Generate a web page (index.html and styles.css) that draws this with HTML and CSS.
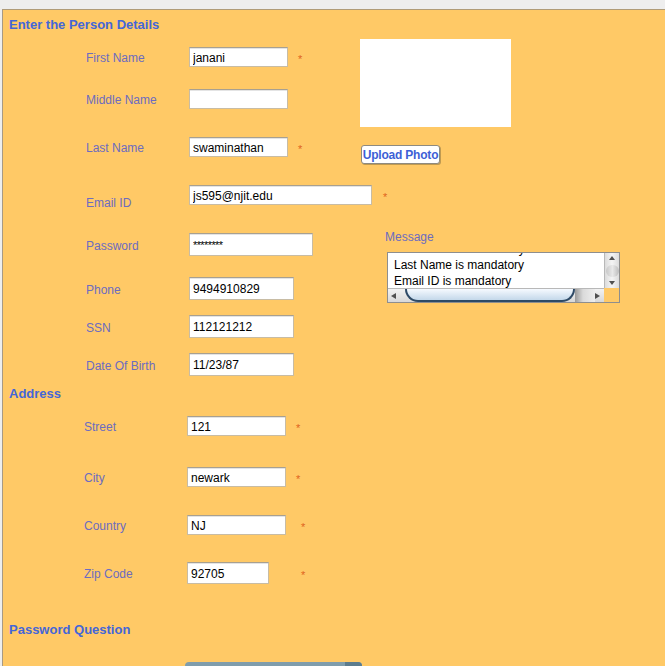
FILE: index.html
```html
<!DOCTYPE html>
<html>
<head>
<meta charset="utf-8">
<link rel="stylesheet" href="styles.css">
</head>
<body>
<div class="panel">
  <h2 class="heading h-person">Enter the Person Details</h2>
  <div class="person">
    <div class="fields">
      <div class="row r1"><span class="lbl">First Name</span><input class="in w-name" value="janani" readonly><span class="req">*</span></div>
      <div class="row r2"><span class="lbl">Middle Name</span><input class="in w-name" value="" readonly></div>
      <div class="row r3"><span class="lbl">Last Name</span><input class="in w-name" value="swaminathan" readonly><span class="req">*</span></div>
      <div class="row r4"><span class="lbl lbl-low">Email ID</span><input class="in w-email" value="js595@njit.edu" readonly><span class="req req-email">*</span></div>
      <div class="row r5"><span class="lbl">Password</span><input class="in w-pass pass" value="********" readonly></div>
      <div class="row r6"><span class="lbl">Phone</span><input class="in w-short" value="9494910829" readonly></div>
      <div class="row r7"><span class="lbl">SSN</span><input class="in w-short" value="112121212" readonly></div>
      <div class="row r8"><span class="lbl">Date Of Birth</span><input class="in w-short" value="11/23/87" readonly></div>
    </div>
    <div class="side">
      <div class="photo"></div>
      <button class="upload">Upload Photo</button>
      <div class="msg-label">Message</div>
      <div class="msg-pane">
        <div class="msg-view">
          <div class="msg-text">
            <div>First Name is mandatory</div>
            <div>Last Name is mandatory</div>
            <div>Email ID is mandatory</div>
          </div>
        </div>
        <div class="vbar">
          <span class="arr up"></span>
          <span class="vthumb"></span>
          <span class="arr down"></span>
        </div>
        <div class="hbar">
          <span class="arr left"></span>
          <span class="hthumb"></span>
          <span class="htrack"></span>
          <span class="arr right"></span>
        </div>
        <div class="corner"></div>
      </div>
    </div>
  </div>

  <h2 class="heading h-address">Address</h2>
  <div class="address">
    <div class="row a1"><span class="lbl">Street</span><input class="in w-name" value="121" readonly><span class="req">*</span></div>
    <div class="row a2"><span class="lbl">City</span><input class="in w-name" value="newark" readonly><span class="req">*</span></div>
    <div class="row a3"><span class="lbl">Country</span><input class="in w-name" value="NJ" readonly><span class="req req-wide">*</span></div>
    <div class="row a4"><span class="lbl">Zip Code</span><input class="in w-zip" value="92705" readonly><span class="req req-zip">*</span></div>
  </div>

  <h2 class="heading h-pq">Password Question</h2>
  <div class="combo"><span class="combo-btn"></span></div>
</div>
</body>
</html>
```

FILE: styles.css
```css
html, body {
  margin: 0;
  padding: 0;
  background: #eeeeee;
  overflow: hidden;
}

body {
  font-family: "Liberation Sans", Arial, sans-serif;
  width: 665px;
  height: 666px;
}

.panel {
  margin: 9px 0 0 2px;
  border-top: 1px solid #b09c78;
  border-left: 1px solid #a89a84;
  background: #ffc966;
  height: 660px;
  padding-top: 6px;
  box-sizing: border-box;
}

.heading {
  margin: 0;
  padding: 1px 0 0 6px;
  font-size: 13px;
  line-height: 16px;
  height: 15px;
  font-weight: bold;
  color: #4466d8;
}

.person {
  display: grid;
  grid-template-columns: 357px 1fr;
}

.fields {
  padding-left: 83px;
}

.address {
  padding-left: 81px;
}

.row {
  display: flex;
  align-items: center;
}

.lbl {
  width: 103px;
  flex: none;
  font-size: 12px;
  line-height: 14px;
  padding-top: 2px;
  color: #6c6cc0;
  white-space: nowrap;
}

.lbl-low {
  padding-top: 16px;
}

.r1 { margin-top: 15px; height: 20px; }
.r2 { margin-top: 22px; height: 20px; }
.r3 { margin-top: 28px; height: 20px; }
.r4 { margin-top: 28px; height: 20px; }
.r5 { margin-top: 28px; height: 23px; }
.r6 { margin-top: 21px; height: 23px; }
.r7 { margin-top: 15px; height: 23px; }
.r8 { margin-top: 15px; height: 23px; }

.a1 { margin-top: 15px; height: 20px; }
.a2 { margin-top: 31px; height: 20px; }
.a3 { margin-top: 28px; height: 20px; }
.a4 { margin-top: 27px; height: 22px; }

.in {
  box-sizing: border-box;
  margin: 0;
  padding: 1px 3px 0;
  background: #ffffff;
  border: 1px solid #c8bca4;
  border-top-color: #a8a090;
  box-shadow: inset 0 1px 0 #e4e4e4;
  font-family: "Liberation Sans", Arial, sans-serif;
  font-size: 12px;
  color: #000000;
  outline: none;
  height: 100%;
  flex: none;
}

.w-name { width: 99px; }
.w-email { width: 183px; }
.w-pass { width: 124px; }
.w-short { width: 105px; }
.w-zip { width: 82px; }

.pass {
  font-size: 11px;
  letter-spacing: -0.6px;
}

.req {
  margin-left: 10px;
  font-size: 11px;
  line-height: 11px;
  padding-top: 5px;
  color: #e0641e;
}

.req-email { margin-left: 11px; }
.req-wide { margin-left: 15px; }
.req-zip { margin-left: 32px; }

.side {
  display: flex;
  flex-direction: column;
  align-items: flex-start;
}

.photo {
  margin-top: 7px;
  width: 151px;
  height: 88px;
  background: #ffffff;
}

.upload {
  margin: 18px 0 0 1px;
  width: 79px;
  height: 19px;
  padding: 0;
  background: #ffffff;
  border: 1px solid #8e8a80;
  border-radius: 3px;
  box-shadow: 1px 1px 0 #c09a50;
  font-family: "Liberation Sans", Arial, sans-serif;
  font-size: 12px;
  font-weight: bold;
  color: #3d5fd6;
  letter-spacing: -0.2px;
  white-space: nowrap;
}

.msg-label {
  margin: 66px 0 0 25px;
  font-size: 12px;
  line-height: 14px;
  color: #6c6cc0;
}

.msg-pane {
  margin: 8px 0 0 27px;
  display: grid;
  grid-template-columns: 216px 15px;
  grid-template-rows: 35px 14px;
  border: 1px solid #8e8e8e;
}

.msg-view {
  background: #ffffff;
  overflow: hidden;
}

.msg-text {
  margin-top: -12px;
  padding-left: 6px;
  font-size: 12px;
  line-height: 16px;
  color: #000000;
  white-space: nowrap;
}

.vbar {
  background: linear-gradient(to right, #dcdcdc, #f4f4f4 50%, #dcdcdc);
  border-left: 1px solid #b8b8b8;
  display: flex;
  flex-direction: column;
  align-items: center;
  justify-content: space-between;
  padding: 3px 0 3px;
  box-sizing: border-box;
}

.vthumb {
  width: 13px;
  height: 12px;
  border-radius: 6px;
  background: linear-gradient(to right, #c8c8c8, #e8e8e8 50%, #bcbcbc);
}

.arr {
  width: 0;
  height: 0;
  flex: none;
}

.up {
  border-left: 3px solid transparent;
  border-right: 3px solid transparent;
  border-bottom: 4px solid #505050;
}

.down {
  border-left: 3px solid transparent;
  border-right: 3px solid transparent;
  border-top: 4px solid #505050;
}

.left {
  border-top: 3px solid transparent;
  border-bottom: 3px solid transparent;
  border-right: 5px solid #505050;
  margin-left: 3px;
}

.right {
  border-top: 3px solid transparent;
  border-bottom: 3px solid transparent;
  border-left: 5px solid #505050;
  margin-right: 4px;
}

.hbar {
  background: linear-gradient(to bottom, #f2f2f2, #d8d8d8);
  border-top: 1px solid #b8b8b8;
  display: flex;
  align-items: stretch;
  box-sizing: border-box;
  overflow: hidden;
}

.hbar .arr {
  align-self: center;
}

.hthumb {
  margin-left: 9px;
  width: 170px;
  box-sizing: border-box;
  border: 2px solid #2e4a66;
  border-top: none;
  border-radius: 0 0 14px 14px;
  background: linear-gradient(to bottom, #f6faff, #c4d8ea);
}

.htrack {
  flex: 1;
  background: linear-gradient(to right, #9a9a9a, #dadada 40%, #eeeeee);
}

.corner {
  background: #ffc966;
}

.h-address {
  margin-top: 9px;
}

.h-pq {
  margin-top: 37px;
}

.combo {
  margin: 25px 0 0 182px;
  width: 177px;
  height: 10px;
  background: #7f9dac;
  border-radius: 4px 4px 0 0;
  display: flex;
  justify-content: flex-end;
}

.combo-btn {
  width: 17px;
  height: 100%;
  background: #5c7c8e;
  border-radius: 0 4px 0 0;
}
```
